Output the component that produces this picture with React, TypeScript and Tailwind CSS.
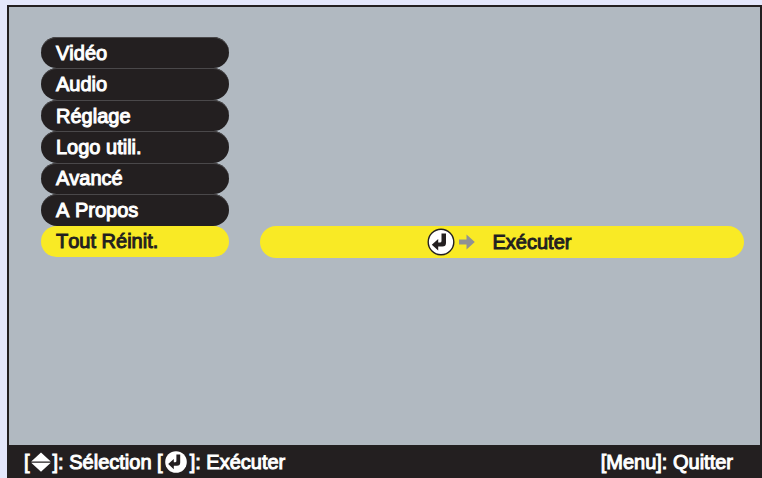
import { useState } from "react";

const MENU_ITEMS = ["Vidéo", "Audio", "Réglage", "Logo utili.", "Avancé", "A Propos", "Tout Réinit."];

interface MenuItemProps {
  label: string;
  active: boolean;
  onSelect: () => void;
}

function MenuItem({ label, active, onSelect }: MenuItemProps) {
  return (
    <button
      type="button"
      onClick={onSelect}
      className={`flex flex-1 items-center rounded-full px-[15px] text-left ${
        active ? "bg-[#f9ea25] text-[#231f20]" : "bg-[#231f20] text-white shadow-[inset_0_1px_0_#4a484a]"
      }`}
    >
      {label}
    </button>
  );
}

function EnterIcon() {
  return (
    <svg viewBox="0 0 28 28" className="size-7 shrink-0" aria-hidden="true">
      <circle cx="14" cy="14" r="12.8" fill="#fff" stroke="#231f20" strokeWidth="1.4" />
      <path d="M14.5 5.5h4.5v9.5q0 3.6-3.6 3.6h-4.2v4L4.8 16.7l6.4-5.7v3.6h1.7q1.6 0 1.6-1.6z" fill="#231f20" />
    </svg>
  );
}

function EnterIconSolid() {
  return (
    <svg viewBox="0 0 22 22" className="mr-[3px] ml-0.5 size-[22px] shrink-0" aria-hidden="true">
      <circle cx="11" cy="11" r="10.8" fill="#fff" />
      <path d="M11.4 3.5h3.8v8q0 3.2-3.2 3.2H8.8v3.6L3.2 12.9l5.6-5v3.4h1.2q1.4 0 1.4-1.4z" fill="#231f20" />
    </svg>
  );
}

function ArrowIcon() {
  return (
    <svg viewBox="0 0 16 16" className="size-4 shrink-0" aria-hidden="true">
      <path d="M0 5.5h7.5V0.5L15.8 8 7.5 15.5v-5H0z" fill="#8f9194" />
    </svg>
  );
}

function UpDownIcon() {
  return (
    <svg viewBox="0 0 20 20" className="mr-0.5 ml-px size-5 shrink-0" aria-hidden="true">
      <path d="M10 0.4 19.8 9.4H0.2zM0.2 10.8h19.6L10 19.8z" fill="#fff" />
    </svg>
  );
}

export default function App() {
  const [selected, setSelected] = useState("Tout Réinit.");

  return (
    <div className="flex min-h-screen flex-col bg-[#e4e7fb] pt-[5px] pl-[7px] font-['Liberation_Sans',Arial,sans-serif] text-[20px] leading-6 [font-kerning:none] [-webkit-text-stroke:1px]">
      <div className="flex grow flex-col border-2 border-b-0 border-[#231f20] bg-[#b1b9c1]">
        <main className="flex grow items-start gap-[31px] pt-[30px] pr-4 pb-8 pl-8">
          <nav className="flex h-[220px] w-[188px] shrink-0 flex-col">
            {MENU_ITEMS.map((item) => (
              <MenuItem key={item} label={item} active={item === selected} onSelect={() => setSelected(item)} />
            ))}
          </nav>

          {/* Action for the selected entry, level with the last row */}
          <div className="flex h-[221px] min-w-0 flex-1 flex-col justify-end">
            <button
              type="button"
              className="flex h-8 items-center justify-center rounded-full bg-[#f9ea25] pr-1.5 text-[#231f20]"
            >
              <EnterIcon />
              <span className="ml-1">
                <ArrowIcon />
              </span>
              <span className="ml-[18px]">Exécuter</span>
            </button>
          </div>
        </main>

        <footer className="flex h-[33px] items-center justify-between bg-[#231f20] pr-[27px] pl-[15px] text-white">
          <div className="flex items-center">
            <span>[</span>
            <UpDownIcon />
            <span className="whitespace-pre">]: Sélection [</span>
            <EnterIconSolid />
            <span>]: Exécuter</span>
          </div>
          <span>[Menu]: Quitter</span>
        </footer>
      </div>
    </div>
  );
}
